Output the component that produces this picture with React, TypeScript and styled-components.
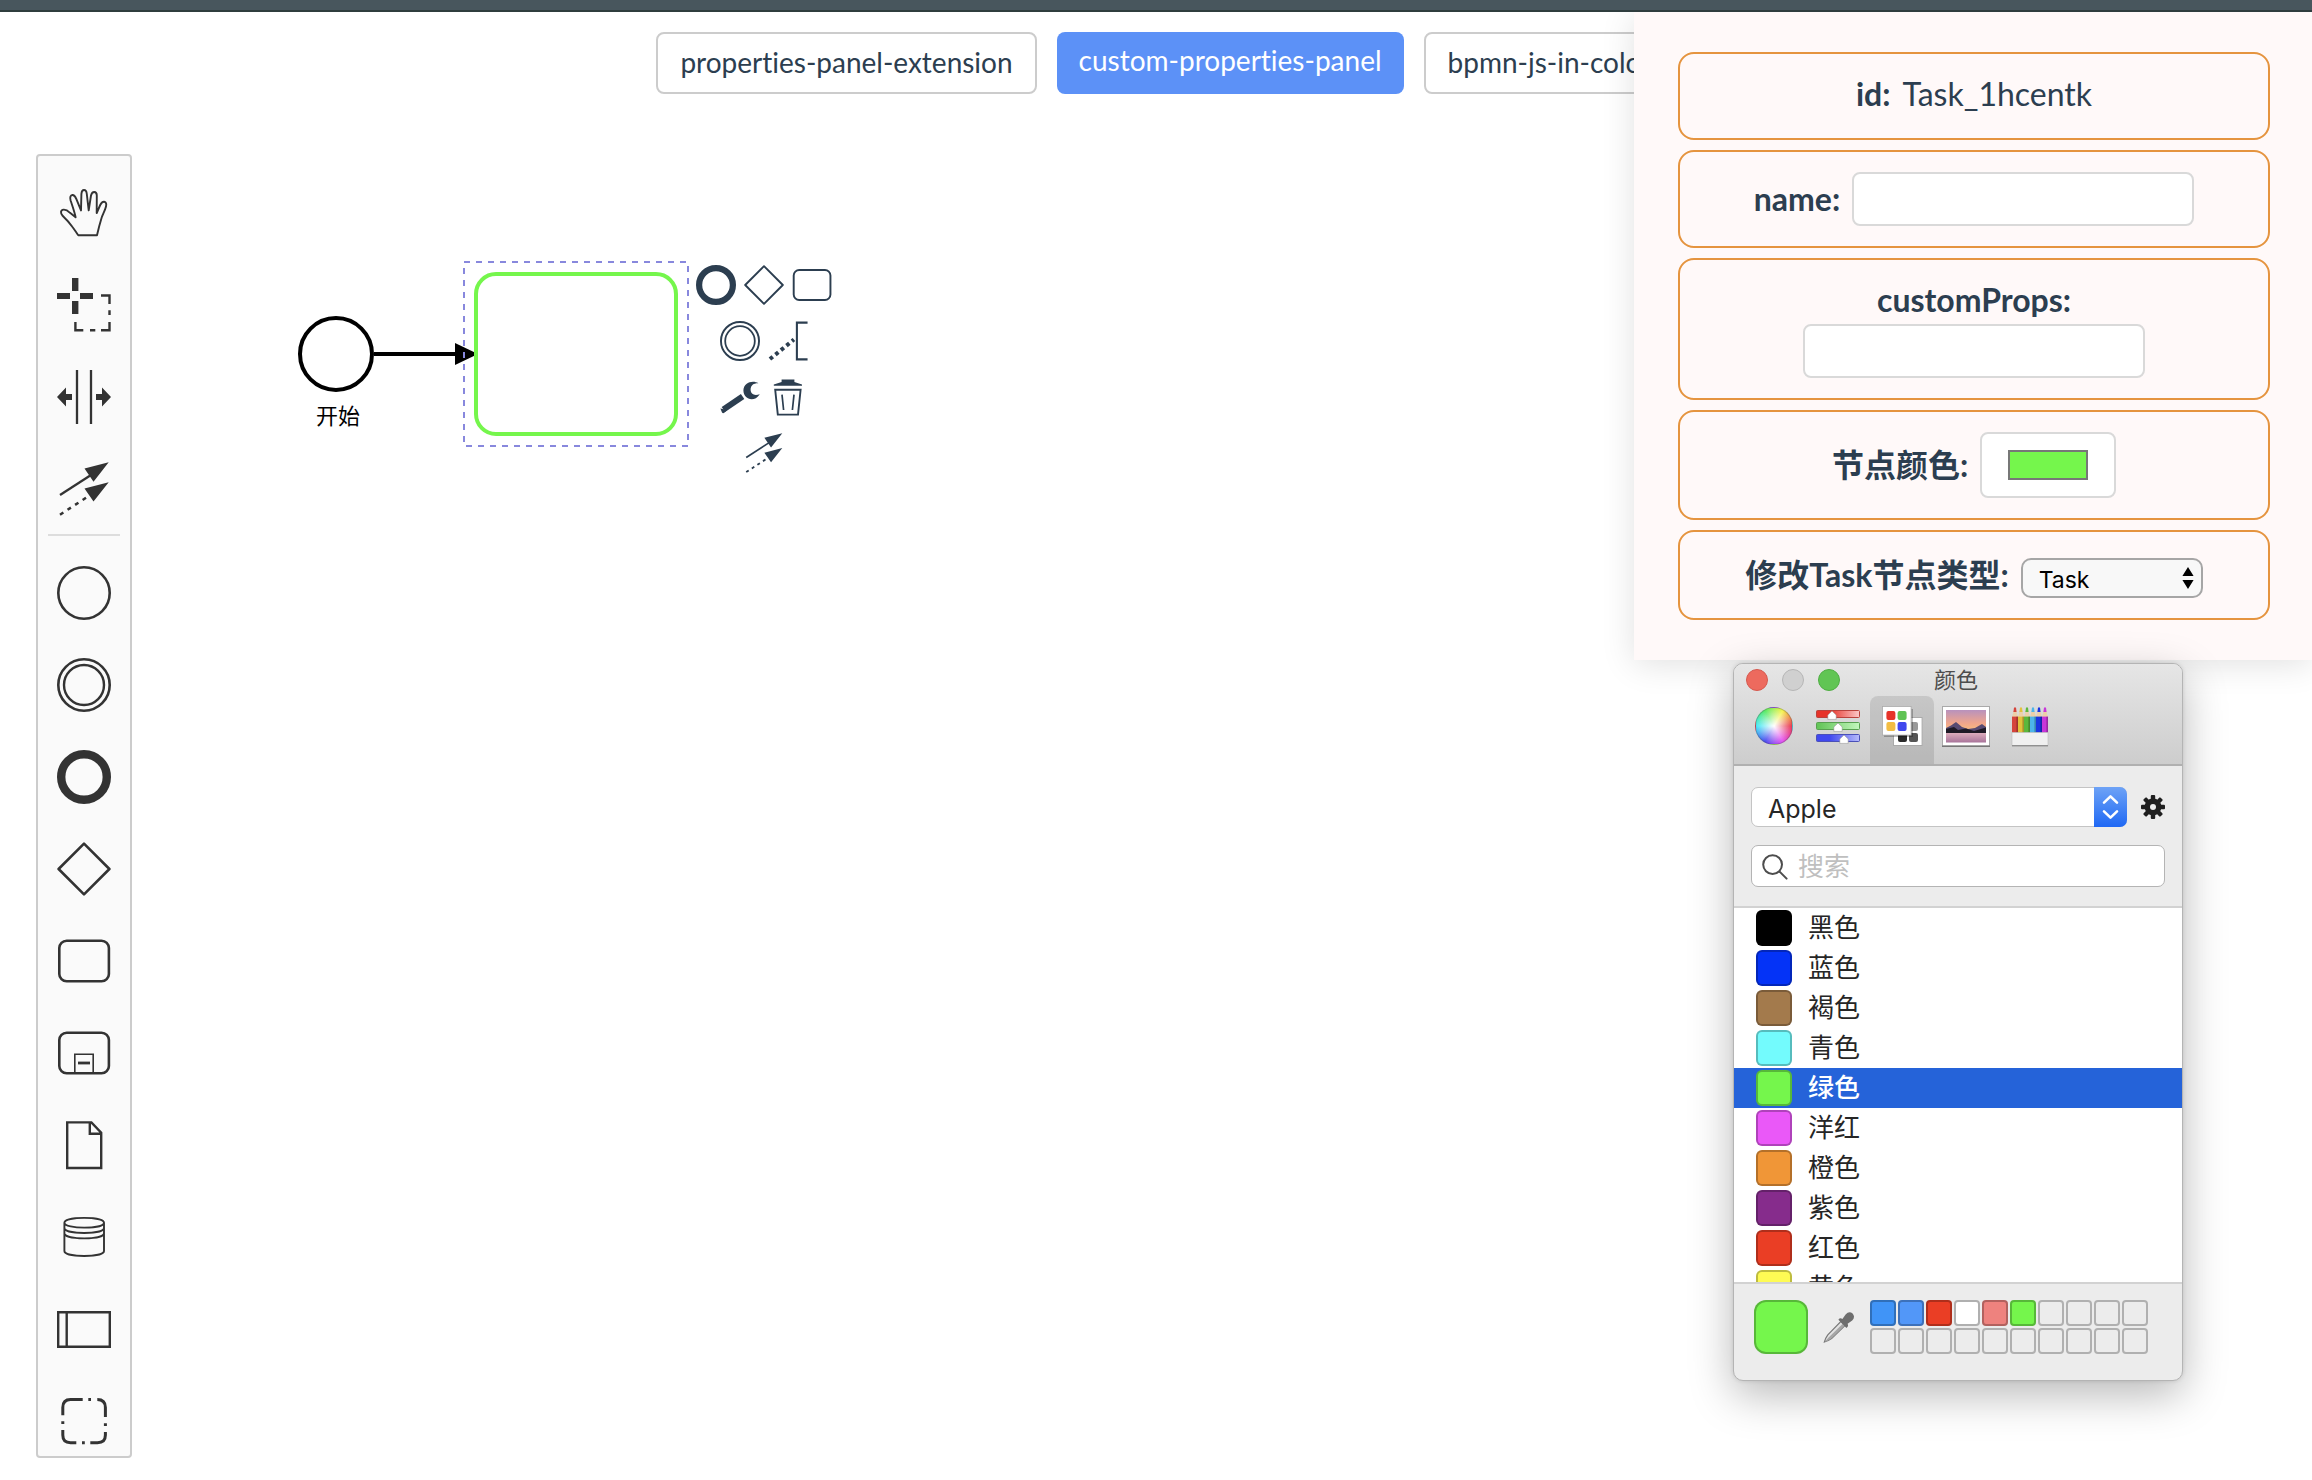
import React, { useState } from "react";
import styled, { createGlobalStyle, css } from "styled-components";

const latin = `Lato, "Noto Sans CJK SC", sans-serif`;
const system = `Inter, "Noto Sans CJK SC", sans-serif`;

const GlobalStyle = createGlobalStyle`
  *, *::before, *::after { box-sizing: border-box; }
  body {
    margin: 0;
    background: #fff;
    color: #2c3e50;
    font-family: ${latin};
    font-variant-ligatures: none;
  }
  button, input, select { font: inherit; color: inherit; margin: 0; }
  button { padding: 0; border: 0; background: none; cursor: pointer; }
  ul { margin: 0; padding: 0; list-style: none; }
`;

const Page = styled.div`
  position: relative;
  min-height: 100vh;
  overflow: hidden;
`;

const TopBar = styled.header`
  height: 12px;
  background: #48565d;
  border-bottom: 2px solid #2f3d3e;
`;

/* ---------- demo navigation ---------- */

const Nav = styled.nav`
  display: flex;
  justify-content: center;
  gap: 20px;
  padding: 20px 0 0 20px;
`;

const NavLink = styled.a<{ $active?: boolean }>`
  height: 62px;
  padding: 8px 22px;
  border: 2px solid #ccc;
  border-radius: 8px;
  font-size: 28px;
  line-height: 40px;
  color: #2c3e50;
  text-decoration: none;
  white-space: nowrap;
  ${(p) =>
    p.$active &&
    css`
      border: 0;
      background: #5c91f7;
      color: #fff;
    `}
`;

/* ---------- modeler ---------- */

const Modeler = styled.main`
  display: flex;
  align-items: flex-start;
  margin-top: 60px;
  padding-left: 36px;
`;

const Palette = styled.aside`
  display: flex;
  flex-direction: column;
  align-items: center;
  width: 96px;
  padding: 30px 0 8px;
  background: #fafafa;
  border: 2px solid #ccc;
  border-radius: 4px;
  color: #333;
`;

const PaletteGroup = styled.div`
  display: flex;
  flex-direction: column;
  gap: 38px;
`;

const Separator = styled.hr`
  width: 72px;
  height: 2px;
  margin: 18px 0 30px;
  border: 0;
  background: #ddd;
`;

const Tool = styled.button`
  width: 54px;
  height: 54px;
  svg { display: block; }
`;

const Canvas = styled.section`
  position: relative;
  flex: 1;
`;

const ContextPad = styled.div`
  position: absolute;
  left: 560px;
  top: 103px;
  display: flex;
  flex-direction: column;
  width: 144px;
`;

const PadRow = styled.div`
  display: flex;
  justify-content: center;
`;

const PadButton = styled.button`
  display: flex;
  align-items: center;
  justify-content: center;
  width: 48px;
  height: 56px;
`;

const Glyph = ({ size, box = 54, children }: { size: number; box?: number; children: React.ReactNode }) => (
  <svg width={size} height={size} viewBox={`0 0 ${box} ${box}`} fill="none" stroke="currentColor" strokeWidth="2.6" aria-hidden="true">
    {children}
  </svg>
);

const solid = { fill: "currentColor", stroke: "none" };

const glyphs = {
  hand: (
    <path
      strokeWidth="1.9"
      strokeLinejoin="round"
      d="M21.3 49.3 C19 46 17 43 15.3 40.7 C12 36 9 33 5.6 29.7 C3.4 27.6 3.2 23.8 6.6 23.6 C9.4 23.4 11 24.8 13 26.8 L18.6 31.3 C17.6 26 15.4 20 13.6 14.5 C12.6 11 13.6 9.2 15.4 9 C17.8 8.8 18.6 11 19.4 13.2 L24 24.4 L24.4 8 C24.6 5.2 25.4 4 27 4 C28.8 4 29.6 5.4 29.8 8 L31.7 24.4 L34 9.5 C34.6 7 35.6 6 37.2 6 C39 6 39.8 7.4 39.8 9.6 L39.7 27 L43.2 19 C44.4 16.4 45.6 15.6 47.2 15.8 C49.2 16.2 49.6 18 49 20.4 C48 24.4 46 28 44.7 31.5 C43 37 41.4 43 40 49.3 Z"
    />
  ),
  lasso: (
    <>
      <path {...solid} d="M15 0h6.4v13H15zM15 23h6.4v13H15zM0 15h13v6H0zM23 15h13v6H23z" />
      <path strokeWidth="2.4" d="M44 17.5H52.5V26M52.5 32.3V37M52.5 44V52.2H44M38.3 52.2H33M26.3 52.2H18.4V44" />
    </>
  ),
  space: (
    <>
      <path strokeWidth="2.3" d="M20 0V54M34 0V54" />
      <path {...solid} d="M0 27L9 17.6V24H15V30H9V36.4ZM54 27L45 17.6V24H39V30H45V36.4Z" />
    </>
  ),
  connect: (
    <>
      <path strokeWidth="2.3" d="M3 33L34 13" />
      <path strokeWidth="2.5" strokeDasharray="4 5" d="M3 52.7L31 34.5" />
      <path {...solid} d="M51.7 .3L27.5 6.5L36.5 19.7ZM51.7 20.3L27.5 26.5L36.5 39.5Z" />
    </>
  ),
  start: <circle cx="27" cy="27" r="25.7" />,
  intermediate: (
    <>
      <circle cx="27" cy="27" r="25.7" />
      <circle cx="27" cy="27" r="20" strokeWidth="2.4" />
    </>
  ),
  end: <circle cx="27" cy="27" r="22.8" strokeWidth="8.4" />,
  gateway: <path strokeLinejoin="round" d="M27 1.6L52.4 27L27 52.4L1.6 27Z" />,
  task: <rect x="2.3" y="6.7" width="49.6" height="40.6" rx="7.4" />,
  subprocess: (
    <>
      <rect x="2.3" y="6.7" width="49.6" height="40.6" rx="7.4" />
      <path strokeWidth="1.6" d="M17.8 47V28.3H36.2V47" />
      <path strokeWidth="2.8" d="M21 37H33" />
    </>
  ),
  data: <path strokeWidth="2.4" d="M10.2 4.4H34.4L44.2 14.8V50H10.2ZM32.8 4.4V15.8H44.2" />,
  store: (
    <path
      strokeWidth="1.9"
      d="M7.4 12.7C7.4 6.3 47 6.3 47 12.7C47 19.3 7.4 19.3 7.4 12.7V41C7.4 47.6 47 47.6 47 41V12.7M7.4 18C7.4 24.6 47 24.6 47 18M7.4 23.3C7.4 30 47 30 47 23.3"
    />
  ),
  participant: <path strokeWidth="2.4" d="M1.2 10.2H52.8V44.8H1.2ZM9.7 10.2V44.8" />,
  group: (
    <path
      strokeWidth="3"
      d="M25.7 5.5H13.5Q5.8 5.5 5.8 13.5V21.3M5.8 27.2V30M5.8 36V41Q5.8 48.7 13.5 48.7H19.3M25 48.7H27.8M33.3 48.7H40.5Q48.4 48.7 48.4 41V38M48.4 29.2V32M48.4 23V13.5Q48.4 5.5 40.3 5.5M31.3 5.5H34"
    />
  ),
  annotation: (
    <>
      <path strokeWidth="5.4" strokeDasharray="5 4.6" d="M2.6 51.4L35 25" />
      <path strokeWidth="2.8" d="M53.4 2.2H39V51.8H53.4" />
    </>
  ),
};

const padGlyphs = {
  wrench: (
    <>
      <path strokeWidth="6" d="M3.4 32.4L22.6 19.4" />
      <path {...solid} d="M.4 31.6L2 35.6Q3 37 4.6 35.6L7 33Z" />
      <path {...solid} d="M38.4 6.2C33 2.6 23.4 5.4 23.4 13.6C23.4 21.6 33.6 26.6 39.8 17.2C34.6 19.2 30.6 17.4 30.6 12.6C30.6 8 34 6 38.4 6.2Z" />
    </>
  ),
  trash: (
    <>
      <path {...solid} d="M13.6 2.4H26.4V5L34 7.4V8.8H5.8V7.4L13.6 5Z" />
      <path strokeWidth="1.9" d="M7.2 12.8H32.6L30 37.6H9.8Z" />
      <path strokeWidth="1.7" d="M14 17.6L15.6 33M26 17.6L24.4 33" />
    </>
  ),
};

const createTools: [keyof typeof glyphs, string][] = [
  ["start", "Create StartEvent"],
  ["intermediate", "Create Intermediate Event"],
  ["end", "Create EndEvent"],
  ["gateway", "Create Gateway"],
  ["task", "Create Task"],
  ["subprocess", "Create expanded SubProcess"],
  ["data", "Create DataObjectReference"],
  ["store", "Create DataStoreReference"],
  ["participant", "Create Pool"],
  ["group", "Create Group"],
];

const editTools: [keyof typeof glyphs, string][] = [
  ["hand", "Hand tool"],
  ["lasso", "Lasso tool"],
  ["space", "Space tool"],
  ["connect", "Connect tool"],
];

const Diagram = ({ color }: { color: string }) => (
  <svg width="720" height="400" viewBox="132 154 720 400" fill="none" aria-label="diagram">
    <circle cx="336" cy="354" r="36" stroke="#000" strokeWidth="4" fill="#fff" />
    <path d="M374 354H462" stroke="#000" strokeWidth="4" />
    <path d="M455 343L478 354L455 365Z" fill="#000" />
    <rect x="476" y="274" width="200" height="160" rx="20" fill="#fff" stroke={color} strokeWidth="4" />
    <rect x="464" y="262" width="224" height="184" stroke="#8888dd" strokeWidth="2" strokeDasharray="6" />
    <text x="338" y="424" fontSize="22" textAnchor="middle" fill="#000" fontFamily={system}>开始</text>
  </svg>
);

/* ---------- properties panel ---------- */

const PropertiesPanel = styled.aside`
  position: absolute;
  top: 12px;
  right: 0;
  z-index: 2;
  display: flex;
  flex-direction: column;
  gap: 10px;
  width: 678px;
  padding: 40px 42px 40px 44px;
  background: #fff9f9;
  box-shadow: 0 4px 32px rgba(0, 0, 0, 0.12);
  clip-path: inset(0 0 -60px -60px);
  font-size: 32px;
  line-height: 40px;
`;

const Field = styled.div<{ $stacked?: boolean }>`
  display: flex;
  flex-direction: ${(p) => (p.$stacked ? "column" : "row")};
  align-items: center;
  justify-content: center;
  gap: ${(p) => (p.$stacked ? 4 : 12)}px;
  padding: 20px;
  border: 2px solid #e5943f;
  border-radius: 16px;
`;

const IdLine = styled.p`
  display: flex;
  gap: 12px;
  margin: 0;
  padding-bottom: 4px;
`;

const FieldLabel = styled.label`
  font-weight: 700;
`;

const TextInput = styled.input`
  width: 342px;
  height: 54px;
  padding: 0 12px;
  border: 2px solid #d9d9d9;
  border-radius: 8px;
  background: #fff;
`;

const ColorInput = styled.input`
  width: 136px;
  height: 66px;
  padding: 16px 26px;
  border: 2px solid #d9d9d9;
  border-radius: 8px;
  background: #fff;
  appearance: none;
  &::-webkit-color-swatch-wrapper { padding: 0; }
  &::-webkit-color-swatch { border: 2px solid #777; border-radius: 0; }
`;

const SelectBox = styled.div`
  position: relative;
  display: flex;
  padding-top: 6px;
`;

const TypeSelect = styled.select`
  width: 182px;
  height: 40px;
  padding: 0 16px 2px;
  border: 2px solid #a6a6a6;
  border-radius: 10px;
  background: #f8f8f8;
  color: #000;
  font-family: ${system};
  font-size: 23px;
  appearance: none;
`;

const TypeArrows = styled.svg`
  position: absolute;
  right: 8px;
  bottom: 8px;
  pointer-events: none;
`;

/* ---------- system colour picker ---------- */

const Picker = styled.section`
  position: absolute;
  top: 663px;
  right: 129px;
  z-index: 3;
  width: 450px;
  border: 1px solid #b4b4b4;
  border-radius: 10px;
  background: #ececec;
  box-shadow: 0 14px 44px rgba(0, 0, 0, 0.28), 0 0 4px rgba(0, 0, 0, 0.12);
  overflow: hidden;
  color: #262626;
  font-family: ${system};
  font-size: 26px;
`;

const PickerHeader = styled.header`
  background: linear-gradient(#e6e6e6, #cdcdcd);
  border-bottom: 2px solid #b0b0b0;
`;

const TitleRow = styled.div`
  display: grid;
  grid-template-columns: 1fr auto 1fr;
  align-items: center;
  height: 32px;
  padding: 0 16px 0 12px;
`;

const Lights = styled.div`
  display: flex;
  gap: 14px;
`;

const Light = styled.button<{ $fill: string; $edge: string }>`
  width: 22px;
  height: 22px;
  border: 1px solid ${(p) => p.$edge};
  border-radius: 50%;
  background: ${(p) => p.$fill};
`;

const PickerTitle = styled.h2`
  margin: 0;
  font-size: 22px;
  font-weight: 400;
  line-height: 28px;
  color: #4d4d4d;
`;

const Tabs = styled.div`
  display: flex;
  padding-left: 8px;
`;

const Tab = styled.button<{ $selected?: boolean }>`
  display: flex;
  justify-content: center;
  align-items: flex-start;
  width: 64px;
  height: 68px;
  padding-top: 6px;
  border-radius: 8px 8px 0 0;
  background: ${(p) => (p.$selected ? "rgba(0, 0, 0, 0.1)" : "none")};
`;

const Wheel = styled.span`
  width: 38px;
  height: 38px;
  margin-top: 5px;
  border-radius: 50%;
  border: 1px solid rgba(80, 80, 80, 0.35);
  background: radial-gradient(circle closest-side, #fff 0%, rgba(255, 255, 255, 0.45) 55%, rgba(255, 255, 255, 0) 100%),
    conic-gradient(from 90deg, #e8384f, #e44ff0, #4a4af0, #45e8f5, #55ea60, #f5f34a, #e8384f);
`;

const Controls = styled.div`
  display: flex;
  flex-direction: column;
  gap: 18px;
  padding: 21px 17px 19px;
  border-bottom: 2px solid #d2d2d2;
`;

const ControlRow = styled.div`
  display: flex;
  align-items: center;
  gap: 14px;
`;

const ListSelectBox = styled.div`
  position: relative;
  flex: 1;
  display: flex;
`;

const ListSelect = styled.select`
  flex: 1;
  height: 40px;
  padding: 3px 16px 0;
  border: 1px solid #c4c4c4;
  border-radius: 7px;
  background: #fff;
  font-size: 25px;
  appearance: none;
`;

const ListArrows = styled.span`
  position: absolute;
  top: 0;
  right: 0;
  bottom: 0;
  display: flex;
  align-items: center;
  justify-content: center;
  width: 33px;
  border-radius: 0 7px 7px 0;
  background: linear-gradient(#6ea3f6, #1f68f4);
  pointer-events: none;
`;

const GearButton = styled.button`
  display: flex;
  width: 24px;
  height: 24px;
`;

const SearchBox = styled.label`
  display: flex;
  align-items: center;
  gap: 10px;
  height: 42px;
  padding: 2px 10px 0;
  border: 1px solid #b4b4b4;
  border-radius: 7px;
  background: #fff;
`;

const SearchInput = styled.input`
  flex: 1;
  min-width: 0;
  padding: 0;
  border: 0;
  outline: 0;
  background: none;
  line-height: 36px;
  &::placeholder { color: #bfbfbf; opacity: 1; }
`;

const ColorList = styled.ul`
  height: 374px;
  overflow: hidden;
  background: #fff;
`;

const ColorRow = styled.button<{ $selected: boolean }>`
  display: flex;
  align-items: center;
  gap: 16px;
  width: 100%;
  height: 40px;
  padding-left: 22px;
  line-height: 40px;
  color: ${(p) => (p.$selected ? "#fff" : "#262626")};
  font-weight: ${(p) => (p.$selected ? 500 : 400)};
  background: ${(p) => (p.$selected ? "#2563d9" : "none")};
`;

const Swatch = styled.span<{ $size: number; $radius: number; $fill: string }>`
  flex: none;
  width: ${(p) => p.$size}px;
  height: ${(p) => p.$size}px;
  border: 2px solid rgba(0, 0, 0, 0.25);
  border-radius: ${(p) => p.$radius}px;
  background: ${(p) => p.$fill};
`;

const PickerFooter = styled.footer`
  display: flex;
  align-items: flex-start;
  gap: 14px;
  height: 98px;
  padding: 16px 20px;
  border-top: 2px solid #d2d2d2;
`;

const Dropper = styled.button`
  display: flex;
  align-items: center;
  justify-content: center;
  width: 34px;
  height: 54px;
`;

const SavedGrid = styled.div`
  display: grid;
  grid-template-columns: repeat(10, 26px);
  gap: 2px;
`;

const SavedCell = styled.button<{ $fill?: string }>`
  width: 26px;
  height: 26px;
  border: 2px solid ${(p) => (p.$fill && p.$fill !== "#ffffff" ? "rgba(0, 0, 0, 0.25)" : "#b0b0b0")};
  border-radius: 4px;
  background: ${(p) => p.$fill ?? "none"};
`;

const colors: [string, string][] = [
  ["黑色", "#000000"],
  ["蓝色", "#0433f7"],
  ["褐色", "#a37a4c"],
  ["青色", "#73fbfd"],
  ["绿色", "#75f64c"],
  ["洋红", "#ea58f8"],
  ["橙色", "#f09637"],
  ["紫色", "#862c8c"],
  ["红色", "#ea3e25"],
  ["黄色", "#fefb54"],
];

const saved = ["#4094f7", "#5297f8", "#ea3e25", "#ffffff", "#ee827e", "#75f64c"];

const SlidersIcon = () => (
  <svg width="48" height="42" viewBox="0 0 48 42" aria-hidden="true">
    <defs>
      <linearGradient id="sr"><stop offset=".3" stopColor="#e63329" /><stop offset="1" stopColor="#fbc9c9" /></linearGradient>
      <linearGradient id="sg"><stop offset="0" stopColor="#5fc354" /><stop offset="1" stopColor="#c3f7bd" /></linearGradient>
      <linearGradient id="sb"><stop offset=".3" stopColor="#4048ee" /><stop offset="1" stopColor="#b7bbfb" /></linearGradient>
    </defs>
    {[["sr", "#b8423c", 18], ["sg", "#58a050", 24], ["sb", "#4a50b8", 30]].map(([id, edge, x], i) => (
      <g key={id} transform={`translate(0 ${8 + i * 12})`}>
        <rect x="2.5" y=".5" width="43" height="7" rx="1" fill={`url(#${id})`} stroke={edge as string} />
        <path transform={`translate(${x} 1)`} d="M0 0L4.2 4V8.4H-4.2V4Z" fill="#fff" stroke="#888" strokeWidth=".5" />
      </g>
    ))}
  </svg>
);

const CardsIcon = () => (
  <svg width="44" height="44" viewBox="0 0 44 44" aria-hidden="true">
    <rect x="13.5" y="15.5" width="28.6" height="28" fill="#fff" stroke="#aaa" />
    <rect x="29" y="20" width="9" height="9" rx="2" fill="#999" />
    <rect x="18" y="31" width="9" height="9" rx="2" fill="#2b2b2b" />
    <rect x="29" y="31" width="9" height="9" rx="2" fill="#555" />
    <rect x="4" y="7" width="29" height="28" fill="#000" opacity=".25" />
    <rect x="2.5" y="4.5" width="28.6" height="28.6" fill="#fff" stroke="#aaa" strokeWidth=".8" />
    <rect x="6.4" y="9" width="9" height="9" rx="2" fill="#e63329" />
    <rect x="17.6" y="9" width="9" height="9" rx="2" fill="#5fc354" />
    <rect x="6.4" y="20" width="9" height="9" rx="2" fill="#f3bd42" />
    <rect x="17.6" y="20" width="9" height="9" rx="2" fill="#4048ee" />
  </svg>
);

const PhotoIcon = () => (
  <svg width="48" height="45" viewBox="0 0 48 45" aria-hidden="true">
    <defs>
      <linearGradient id="sky" x2="0" y2="1"><stop offset="0" stopColor="#b892bd" /><stop offset=".6" stopColor="#f0a58c" /><stop offset="1" stopColor="#f9c07a" /></linearGradient>
      <linearGradient id="lake" x2="0" y2="1"><stop offset="0" stopColor="#e3b3c0" /><stop offset="1" stopColor="#a8749a" /></linearGradient>
    </defs>
    <rect x=".5" y="4.5" width="47" height="39.5" fill="#fff" stroke="#aaa" />
    <path d="M0 44.2H48" stroke="#777" strokeWidth="1.4" />
    <rect x="4" y="8" width="40" height="22" fill="url(#sky)" />
    <rect x="4" y="30" width="40" height="10.5" fill="url(#lake)" />
    <path d="M4 26L9 23.5L14 20L20 25L26 27L33 26L40 22L44 25V31H4Z" fill="#574a72" />
    <path d="M4 27L12 25L16 28L24 26.5L32 29L44 25.5V31H4Z" fill="#1f1a26" />
  </svg>
);

const pencils = ["#d5443c", "#e3c23c", "#5cb83c", "#4db4ea", "#1b35e0", "#c837d8"];

const PencilsIcon = () => (
  <svg width="38" height="45" viewBox="0 0 38 45" aria-hidden="true">
    {pencils.map((c, i) => (
      <g key={c} transform={`translate(${1 + i * 6} 0)`}>
        <path d="M0 15.4L1.6 9H4.4L6 15.4Z" fill="#ecd0a8" />
        <path d="M1.4 10L2 5.6H4L4.6 10Z" fill={c} />
        <rect y="14.6" width="6" height="16" fill={c} />
        <rect x="4.4" y="14.6" width="1.6" height="16" fill="#000" opacity=".25" />
      </g>
    ))}
    <rect x="1" y="30.6" width="36" height="13" fill="#f0f0f0" stroke="#bbb" strokeWidth=".6" />
    <path d="M1 43.8H37" stroke="#777" />
  </svg>
);

const GearIcon = () => (
  <svg width="24" height="24" viewBox="-12 -12 24 24" fill="#1f1f1f" aria-hidden="true">
    {[0, 45, 90, 135].map((a) => (
      <rect key={a} x="-2.2" y="-12" width="4.4" height="24" rx="1" transform={`rotate(${a})`} />
    ))}
    <circle r="8.4" />
    <circle r="3" fill="#ececec" />
  </svg>
);

const DropperIcon = () => (
  <svg width="32" height="32" viewBox="0 0 32 32" aria-hidden="true">
    <path d="M18 10.4L22 14.4L8.6 27.6Q5.4 29.6 1.4 31Q2.4 27 4.8 23.8Z" fill="#e2e2e2" stroke="#777" strokeWidth="1.2" />
    <path d="M20 12.4L5.6 26.6L1.6 30.8Q4.8 29.8 8.4 27.4L22 14.2Z" fill="#a6a6a6" />
    <path d="M15.4 8.8Q17 6.4 19.4 8L22.6 3.4Q26 -.2 29.6 2.4Q32.6 6 29.2 9.6L24.6 12.8Q26 15.4 23.4 17Z" fill="#6e6e6e" />
  </svg>
);

export default function App() {
  const [color, setColor] = useState("#75f64c");

  return (
    <Page>
      <GlobalStyle />
      <TopBar />
      <Nav>
        <NavLink href="#properties-panel-extension">properties-panel-extension</NavLink>
        <NavLink href="#custom-properties-panel" $active>custom-properties-panel</NavLink>
        <NavLink href="#bpmn-js-in-color">bpmn-js-in-color</NavLink>
      </Nav>

      <Modeler>
        <Palette>
          <PaletteGroup>
            {editTools.map(([id, title]) => (
              <Tool key={id} aria-label={title}><Glyph size={54}>{glyphs[id]}</Glyph></Tool>
            ))}
          </PaletteGroup>
          <Separator />
          <PaletteGroup>
            {createTools.map(([id, title]) => (
              <Tool key={id} aria-label={title}><Glyph size={54}>{glyphs[id]}</Glyph></Tool>
            ))}
          </PaletteGroup>
        </Palette>

        <Canvas>
          <Diagram color={color} />
          <ContextPad>
            <PadRow>
              <PadButton aria-label="Append EndEvent"><Glyph size={40}>{glyphs.end}</Glyph></PadButton>
              <PadButton aria-label="Append Gateway"><Glyph size={40}>{glyphs.gateway}</Glyph></PadButton>
              <PadButton aria-label="Append Task"><Glyph size={40}>{glyphs.task}</Glyph></PadButton>
            </PadRow>
            <PadRow>
              <PadButton aria-label="Append Intermediate Event"><Glyph size={40}>{glyphs.intermediate}</Glyph></PadButton>
              <PadButton aria-label="Append TextAnnotation"><Glyph size={40}>{glyphs.annotation}</Glyph></PadButton>
            </PadRow>
            <PadRow>
              <PadButton aria-label="Change type"><Glyph size={40} box={40}>{padGlyphs.wrench}</Glyph></PadButton>
              <PadButton aria-label="Remove"><Glyph size={40} box={40}>{padGlyphs.trash}</Glyph></PadButton>
            </PadRow>
            <PadRow>
              <PadButton aria-label="Connect"><Glyph size={40}>{glyphs.connect}</Glyph></PadButton>
            </PadRow>
          </ContextPad>
        </Canvas>
      </Modeler>

      <PropertiesPanel>
        <Field>
          <IdLine><b>id:</b><span>Task_1hcentk</span></IdLine>
        </Field>
        <Field>
          <FieldLabel htmlFor="name">name:</FieldLabel>
          <TextInput id="name" />
        </Field>
        <Field $stacked>
          <FieldLabel htmlFor="customProps">customProps:</FieldLabel>
          <TextInput id="customProps" />
        </Field>
        <Field>
          <FieldLabel htmlFor="color">节点颜色:</FieldLabel>
          <ColorInput id="color" type="color" value={color} onChange={(e) => setColor(e.target.value)} />
        </Field>
        <Field>
          <FieldLabel htmlFor="type">修改Task节点类型:</FieldLabel>
          <SelectBox>
            <TypeSelect id="type" defaultValue="Task">
              <option>Task</option>
            </TypeSelect>
            <TypeArrows width="14" height="24" viewBox="0 0 14 24" aria-hidden="true">
              <path d="M1.4 10L7 1L12.6 10ZM1.4 14L7 23L12.6 14Z" fill="#000" />
            </TypeArrows>
          </SelectBox>
        </Field>
      </PropertiesPanel>

      <Picker>
        <PickerHeader>
          <TitleRow>
            <Lights>
              <Light aria-label="close" $fill="#ed6a5e" $edge="#d5594e" />
              <Light aria-label="minimise" $fill="#d0d0d0" $edge="#b6b6b6" />
              <Light aria-label="zoom" $fill="#61c554" $edge="#4fae43" />
            </Lights>
            <PickerTitle>颜色</PickerTitle>
          </TitleRow>
          <Tabs>
            <Tab aria-label="wheel"><Wheel /></Tab>
            <Tab aria-label="sliders"><SlidersIcon /></Tab>
            <Tab aria-label="palettes" $selected><CardsIcon /></Tab>
            <Tab aria-label="image"><PhotoIcon /></Tab>
            <Tab aria-label="pencils"><PencilsIcon /></Tab>
          </Tabs>
        </PickerHeader>

        <Controls>
          <ControlRow>
            <ListSelectBox>
              <ListSelect aria-label="palette" defaultValue="Apple">
                <option>Apple</option>
              </ListSelect>
              <ListArrows>
                <svg width="17" height="26" viewBox="0 0 17 26" fill="none" stroke="#fff" strokeWidth="2.6" strokeLinecap="round" strokeLinejoin="round" aria-hidden="true">
                  <path d="M2 8.6L8.5 2.4L15 8.6M2 17.4L8.5 23.6L15 17.4" />
                </svg>
              </ListArrows>
            </ListSelectBox>
            <GearButton aria-label="options"><GearIcon /></GearButton>
          </ControlRow>
          <SearchBox>
            <svg width="26" height="26" viewBox="0 0 26 26" fill="none" stroke="#4d4d4d" strokeWidth="2" strokeLinecap="round" aria-hidden="true">
              <circle cx="10.6" cy="10.6" r="9.4" />
              <path d="M17.6 17.6L24.6 24.6" />
            </svg>
            <SearchInput type="search" placeholder="搜索" />
          </SearchBox>
        </Controls>

        <ColorList>
          {colors.map(([name, value]) => (
            <li key={name}>
              <ColorRow $selected={value === color} onClick={() => setColor(value)}>
                <Swatch $size={36} $radius={6} $fill={value} />
                {name}
              </ColorRow>
            </li>
          ))}
        </ColorList>

        <PickerFooter>
          <Swatch $size={54} $radius={12} $fill={color} />
          <Dropper aria-label="pick from screen"><DropperIcon /></Dropper>
          <SavedGrid>
            {Array.from({ length: 20 }, (_, i) => (
              <SavedCell key={i} aria-label={`saved ${i + 1}`} $fill={saved[i]} />
            ))}
          </SavedGrid>
        </PickerFooter>
      </Picker>
    </Page>
  );
}
